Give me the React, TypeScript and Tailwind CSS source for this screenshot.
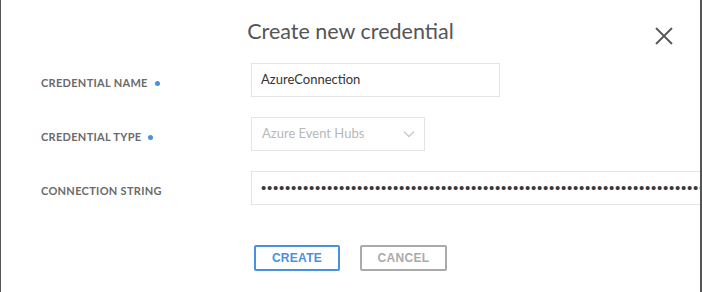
import React from "react";

const dots = "•".repeat(80);

function Row({ label, required, children }: { label: string; required?: boolean; children: React.ReactNode }) {
  return (
    <div className="flex items-center h-[34px]">
      <div className="w-[250px] shrink-0 pl-[40px] pt-[6px] flex items-center">
        <span className="text-[11px] font-bold tracking-[0.3px] text-[#6a6a6a] leading-[14px]">{label}</span>
        {required && <span className="ml-[7px] w-[5px] h-[5px] rounded-full bg-[#4a90e2]" />}
      </div>
      {children}
    </div>
  );
}

export default function App() {
  return (
    <div
      className="relative w-[702px] h-[292px] bg-white border-l border-r-2 border-[#555] overflow-hidden"
      style={{ fontFamily: "Lato, 'Open Sans', sans-serif" }}
    >
      <div className="pt-[18px] text-center">
        <h1 className="text-[21.5px] leading-[26px] text-[#555] font-normal">Create new credential</h1>
      </div>
      <button className="absolute left-[654px] top-[27px] w-[18px] h-[18px] flex items-center justify-center text-[#555]">
        <svg width="18" height="18" viewBox="0 0 18 18" fill="none" stroke="currentColor" strokeWidth="1.8">
          <path d="M1 1 L17 17 M17 1 L1 17" />
        </svg>
      </button>

      <div className="mt-[19px] flex flex-col gap-[20px]">
        <Row label="CREDENTIAL NAME" required>
          <div className="w-[249px] h-[34px] border border-[#e4e4e4] flex items-center pl-[9px] text-[13px] text-[#333]">
            AzureConnection
          </div>
        </Row>
        <Row label="CREDENTIAL TYPE" required>
          <div className="w-[174px] h-[34px] border border-[#e4e4e4] flex items-center justify-between pl-[10px] pr-[9px] text-[13px] text-[#b8b8b8]">
            <span>Azure Event Hubs</span>
            <svg width="12" height="8" viewBox="0 0 12 8" fill="none" stroke="#c8c8c8" strokeWidth="1.3">
              <path d="M1 1.5 L6 6.5 L11 1.5" />
            </svg>
          </div>
        </Row>
        <Row label="CONNECTION STRING">
          <div className="w-[470px] shrink-0 h-[34px] border border-[#e4e4e4] flex items-center pl-[9px] overflow-hidden">
            <span
              className="text-[15px] leading-[20px] text-[#3a3a3a] tracking-[0.75px] whitespace-nowrap"
              style={{ fontFamily: "'Liberation Sans', Arial, sans-serif" }}
            >
              {dots}
            </span>
          </div>
        </Row>
      </div>

      <div
        className="mt-[40px] pl-[253px] flex gap-[20px]"
        style={{ fontFamily: "'Liberation Sans', Arial, sans-serif" }}
      >
        <button className="w-[86px] h-[26px] border-2 border-[#4a90e2] rounded-[2px] text-[12px] font-bold text-[#4a90e2] tracking-[0.3px]">
          CREATE
        </button>
        <button className="w-[87px] h-[26px] border-2 border-[#aaaaaa] rounded-[2px] text-[12px] font-bold text-[#aaaaaa] tracking-[0.3px]">
          CANCEL
        </button>
      </div>
    </div>
  );
}
